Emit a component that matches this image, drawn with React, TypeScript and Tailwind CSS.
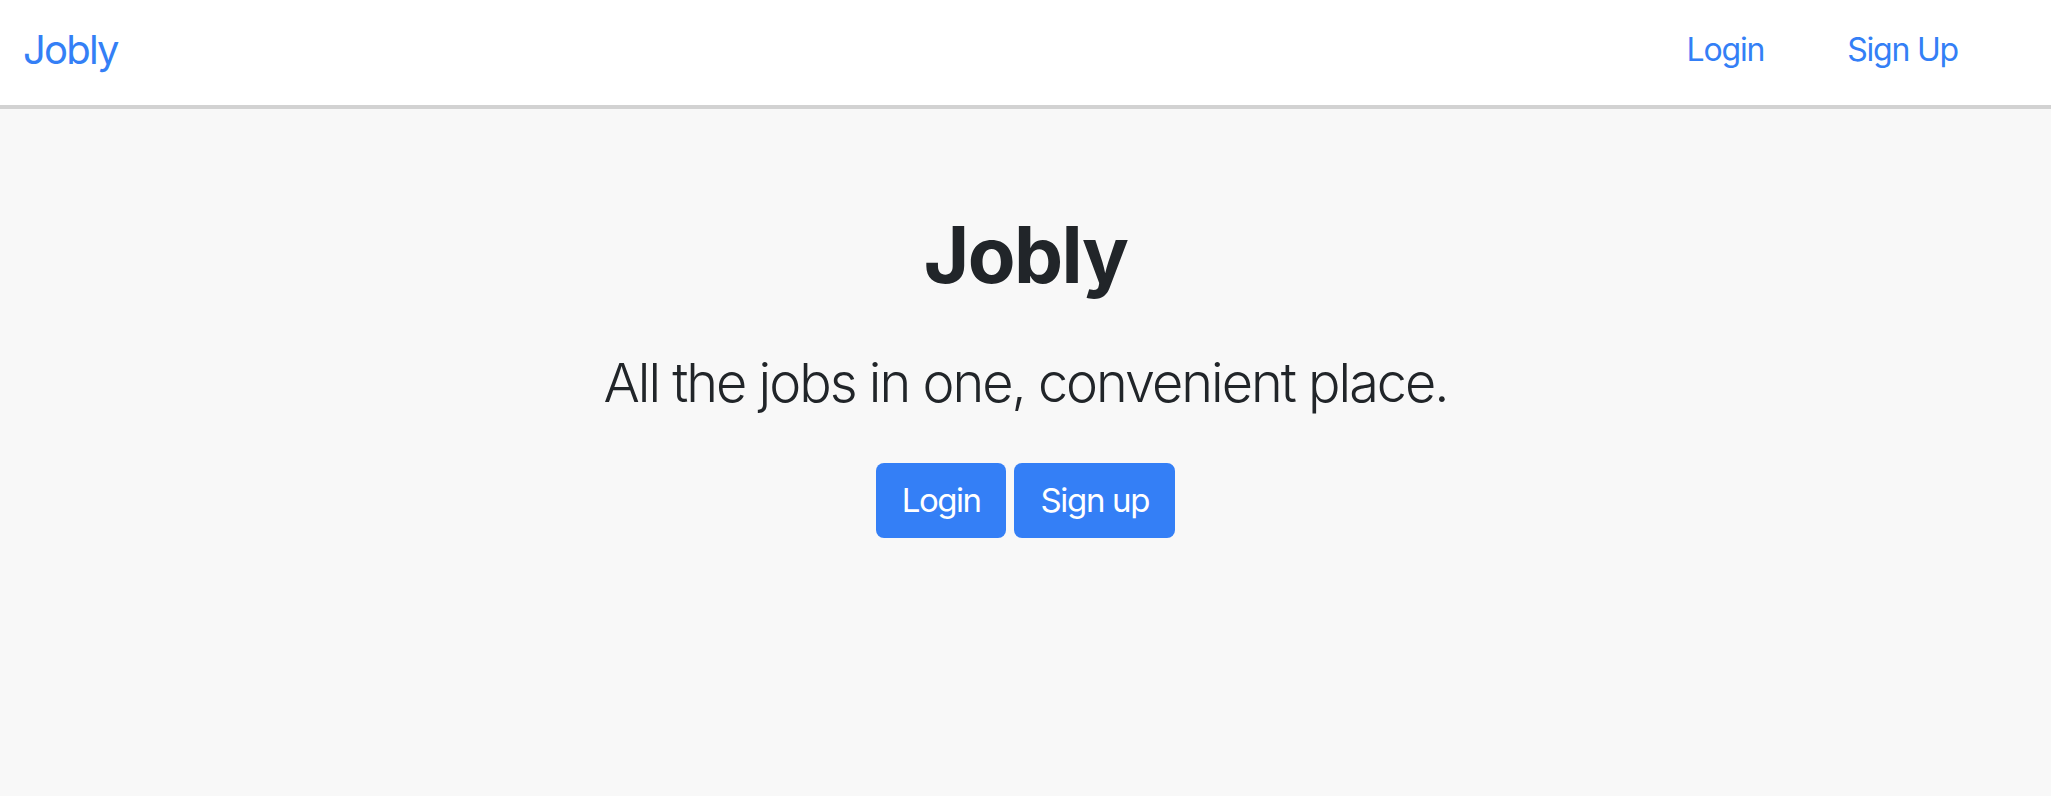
import React from "react";

const NavBar: React.FC = () => {
  return (
    <nav className="h-[109px] bg-white border-b-4 border-[#d2d2d2] flex items-center justify-between pl-[23px] pr-[93px] pb-[6px]">
      <a href="#" className="text-[40px] leading-none tracking-[-1.8px] text-[#347ff6]">
        Jobly
      </a>
      <div className="flex items-center gap-[83px]">
        <a href="#" className="text-[32px] leading-none tracking-[-1.2px] text-[#347ff6]">
          Login
        </a>
        <a href="#" className="text-[32px] leading-none tracking-[-1.2px] text-[#347ff6]">
          Sign Up
        </a>
      </div>
    </nav>
  );
};

const App: React.FC = () => {
  return (
    <div className="min-h-screen bg-[#f8f8f8] font-['Inter',sans-serif]">
      {/* Top navigation */}
      <NavBar />

      {/* Hero */}
      <main className="flex flex-col items-center pt-[107px] text-[#212529]">
        <h1 className="text-[78px] font-bold leading-none tracking-[-1.6px]">Jobly</h1>
        <p className="mt-[62px] text-[54px] font-light leading-none tracking-[-2px]">
          All the jobs in one, convenient place.
        </p>
        <div className="mt-[53px] flex gap-[8px]">
          <button className="h-[75px] px-[26px] rounded-[8px] bg-[#347ff6] text-white text-[33px] leading-none tracking-[-1.5px]">
            Login
          </button>
          <button className="h-[75px] px-[26px] rounded-[8px] bg-[#347ff6] text-white text-[33px] leading-none tracking-[-1.3px]">
            Sign up
          </button>
        </div>
      </main>
    </div>
  );
};

export default App;
